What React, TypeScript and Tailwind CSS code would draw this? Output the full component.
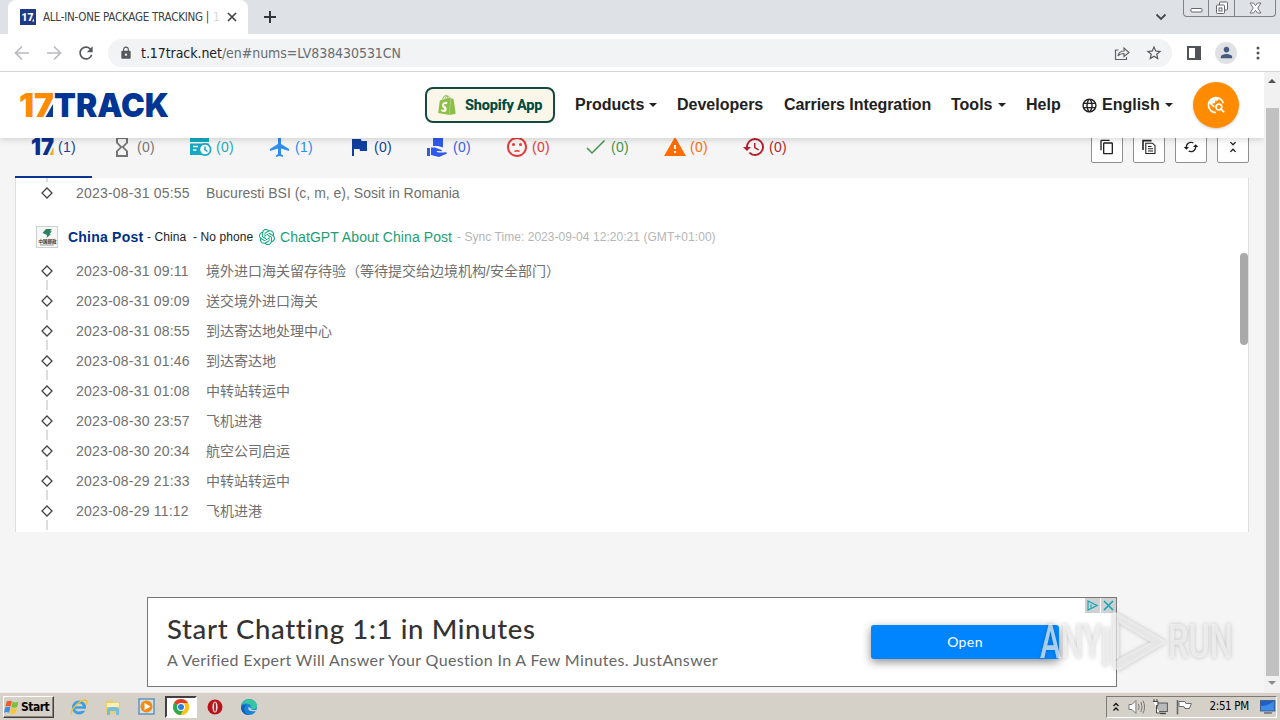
import React from "react";
import {
  MdContentCopy,
  MdFlag,
  MdFlight,
  MdHistory,
  MdHourglassEmpty,
  MdLanguage,
  MdLock,
  MdPerson,
  MdRefresh,
  MdStarBorder,
  MdTravelExplore,
  MdUnfoldLess,
  MdWarning,
  MdCached,
  MdSentimentDissatisfied,
} from "react-icons/md";
import { SiOpenai, SiShopify } from "react-icons/si";

const sans = "font-['Liberation_Sans','Noto_Sans_CJK_SC',sans-serif]";
const chrome = "font-['DejaVu_Sans_Condensed','DejaVu_Sans',sans-serif]";

function TabStrip() {
  return (
    <div className="flex h-[34px] shrink-0 items-end bg-[#dee1e6] pl-2">
      <div className="flex h-[34px] w-[240px] items-center rounded-t-lg bg-white pl-3">
        <svg width="16" height="16" viewBox="0 0 16 16" className="shrink-0">
          <rect width="16" height="16" fill="#1f3a85" />
          <text x="1.500" y="12" fontSize="11" fontWeight="900" fontFamily="Roboto" fill="#fff" textLength="12" lengthAdjust="spacingAndGlyphs">17</text>
          <path d="M12 12.500l2-3v3z" fill="#fff" />
        </svg>
        <div className="ml-[7px] flex w-[176px] overflow-hidden whitespace-nowrap text-[11.5px] leading-4 tracking-[-0.24px] text-[#3c4043]">
          ALL-IN-ONE PACKAGE TRACKING |<span className="ml-1 text-[#d5d7da]">1</span>
        </div>
        <svg width="12" height="12" viewBox="0 0 12 12" className="ml-[7px]" stroke="#3c4043" strokeWidth="1.600">
          <path d="M2 2l8 8M10 2l-8 8" />
        </svg>
      </div>
      <svg width="14" height="14" viewBox="0 0 14 14" className="mb-2.5 ml-[15px]" stroke="#33363a" strokeWidth="2">
        <path d="M7 1v12M1 7h12" />
      </svg>
      <div className="flex-1" />
      <svg width="12" height="8" viewBox="0 0 12 8" className="mr-4 mb-[13px]" fill="none" stroke="#44474b" strokeWidth="1.800">
        <path d="M1.500 1.500L6 6l4.500-4.500" />
      </svg>
      <div className="mr-1 flex h-[17px] w-[93px] self-start rounded-b-[4px] border border-t-0 border-[#7d828b]">
        <div className="flex w-[25px] items-center justify-center border-r border-[#7d828b]">
          <svg width="13" height="16" viewBox="0 0 13 16" fill="#fff" stroke="#62666e">
            <rect x="1" y="8.500" width="11" height="3.500" rx="1" />
          </svg>
        </div>
        <div className="flex w-[26px] items-center justify-center border-r border-[#7d828b]">
          <svg width="14" height="14" viewBox="0 0 14 14" fill="#fff" stroke="#62666e">
            <rect x="4.500" y="1" width="8" height="8" rx="1" />
            <rect x="1.500" y="4" width="8" height="8.500" rx="1" />
            <rect x="4" y="7" width="3" height="3" />
          </svg>
        </div>
        <div className="flex flex-1 items-center justify-center">
          <svg width="13" height="12" viewBox="0 0 13 12" fill="#fff" stroke="#62666e" strokeWidth="0.900">
            <path d="M1 1h3.500l2 2.700 2-2.700H12L8.700 6 12 11H8.500l-2-2.700-2 2.700H1l3.300-5z" />
          </svg>
        </div>
      </div>
    </div>
  );
}

function Toolbar() {
  return (
    <div className="flex h-[38px] shrink-0 items-center border-b border-[#d3d5d8] bg-white">
      <svg width="16" height="16" viewBox="0 0 16 16" className="ml-3.5" fill="none" stroke="#b9bbbe" strokeWidth="1.700">
        <path d="M15 8H2M8 1.500L1.500 8 8 14.500" />
      </svg>
      <svg width="16" height="16" viewBox="0 0 16 16" className="ml-4" fill="none" stroke="#b9bbbe" strokeWidth="1.700">
        <path d="M1 8h13M8 1.500L14.500 8 8 14.500" />
      </svg>
      <MdRefresh className="ml-[14px] size-5 text-[#54575b]" />
      <div className="ml-3 flex h-7 w-[1064px] items-center rounded-full bg-[#f1f3f4]">
        <MdLock className="ml-[11px] size-[14px] text-[#55585c]" />
        <div className="ml-2 whitespace-nowrap text-[14px] leading-5 tracking-[-0.06px] text-[#6a6d71]">
          <span className="text-[#202124]">t.17track.net</span>/en#nums=LV838430531CN
        </div>
        <div className="flex-1" />
        <svg width="16" height="16" viewBox="0 0 16 16" fill="none" stroke="#5f6368" strokeWidth="1.200">
          <path d="M4.500 5H1.500v9.500h11V12M4 11c.5-3.500 2.500-5 6-5V3l5 4.500-5 4V8.500C7.500 8.500 5.500 9 4 11z" />
        </svg>
        <MdStarBorder className="mr-[9px] ml-[15px] size-[18px] text-[#55585c]" />
      </div>
      <svg width="14" height="14" viewBox="0 0 14 14" className="ml-[15px]">
        <path d="M0 0h14v14H0zM2 2v10h6V2z" fill="#505357" fillRule="evenodd" />
      </svg>
      <div className="ml-3.5 flex size-[22px] items-center justify-center rounded-full bg-[#dfe1e5]">
        <MdPerson className="size-[17px] text-[#475a80]" />
      </div>
      <svg width="4" height="14" viewBox="0 0 4 14" className="ml-[19px]" fill="#505357">
        <circle cx="2" cy="2" r="1.500" />
        <circle cx="2" cy="7" r="1.500" />
        <circle cx="2" cy="12" r="1.500" />
      </svg>
    </div>
  );
}

function Caret() {
  return (
    <svg width="8" height="4" viewBox="0 0 8 4" className="shrink-0">
      <path d="M0 0h8L4 4z" fill="#222" />
    </svg>
  );
}

function SiteHeader() {
  return (
    <header className="relative z-10 flex h-[66px] shrink-0 items-center gap-5 bg-white pr-[25px] pl-5 text-[16px] font-bold whitespace-nowrap text-[#212121] shadow-[0_2px_6px_rgba(0,0,0,0.14)]">
      <svg width="150" height="26" viewBox="0 0 150 26" className="overflow-visible" fontFamily="Inter, Roboto, sans-serif" fontWeight="900" fontSize="33">
        <text x="-1" y="25" fill="#ff8c00" textLength="35" lengthAdjust="spacingAndGlyphs">17</text>
        <path d="M25.500 25l7.500-13v13z" fill="#0a3a8f" />
        <text x="34" y="25" fill="#003594" textLength="115" lengthAdjust="spacingAndGlyphs">TRACK</text>
      </svg>
      <div className="flex-1" />
      <div className="flex h-9 w-[130px] items-center rounded-lg border-2 border-[#154a40] bg-[#fbf6ea] pl-2.5">
        <SiShopify className="size-[20px] shrink-0 text-[#8bbf4a]" />
        <span className="mt-px ml-[8px] font-['Roboto',sans-serif] text-[14.5px] font-extrabold tracking-[-0.2px] text-[#004c3f]">Shopify App</span>
      </div>
      <div className="flex w-[82px] items-center justify-between">Products<Caret /></div>
      <div className="w-[87px]">Developers</div>
      <div className="w-[147px] tracking-[-0.06px]">Carriers Integration</div>
      <div className="flex w-[55px] items-center justify-between">Tools<Caret /></div>
      <div className="w-[35px]">Help</div>
      <div className="flex w-[92px] items-center">
        <MdLanguage className="mr-1 size-[17px]" />
        <span className="flex-1">English</span>
        <Caret />
      </div>
      <div className="flex size-[46px] items-center justify-center rounded-full bg-[#ff8c00] shadow-[0_1px_3px_rgba(0,0,0,0.2)]">
        <MdTravelExplore className="size-5 text-white" />
      </div>
    </header>
  );
}

function Logo17() {
  return (
    <svg width="24" height="24" viewBox="0 0 24 24" className="overflow-visible" fontFamily="Inter, Roboto, sans-serif">
      <text x="0" y="20" fontSize="23" fontWeight="900" fill="#0a318f" textLength="23" lengthAdjust="spacingAndGlyphs">17</text>
      <path d="M18.500 20l4-8v8z" fill="#f5a623" />
    </svg>
  );
}

function CardClock() {
  return (
    <svg width="24" height="24" viewBox="0 0 24 24">
      <path d="M1 3h19v4H1zM1 8.500h19V20H1z" fill="#17a9c0" />
      <path d="M4 11.500h5M4 15h3.500" stroke="#f5f5f5" strokeWidth="1.500" />
      <circle cx="16" cy="14.500" r="6.500" fill="#17a9c0" />
      <circle cx="16" cy="14.500" r="4.800" fill="#f5f5f5" />
      <path d="M16 11.500v3.200l2.500 1.800" fill="none" stroke="#17a9c0" strokeWidth="1.500" />
    </svg>
  );
}

function HandBox() {
  return (
    <svg width="24" height="24" viewBox="0 0 24 24" fill="#2f5bea">
      <path d="M7 2h10v10.500l-5-1.500H7z" />
      <path d="M1 13h3v8H1zM5 12.500h4l6 2.200c.8.300 1 .8 1 1.500l-5-.2-.2.900 2.200.6H18c1.500-.5 3 0 3 1L13 22l-8-2z" />
    </svg>
  );
}

function ThinCheck() {
  return (
    <svg width="24" height="24" viewBox="0 0 24 24" fill="none" stroke="currentColor" strokeWidth="1.500">
      <path d="M3 13l5 5L20.500 5.500" />
    </svg>
  );
}

const tabs = [
  { icon: <Logo17 />, n: 1, color: "text-[#1c3f94]" },
  { icon: <MdHourglassEmpty className="size-6" />, n: 0, color: "text-[#757575]" },
  { icon: <CardClock />, n: 0, color: "text-[#26a9be]" },
  { icon: <MdFlight className="size-6" />, n: 1, color: "text-[#2f8cf0]" },
  { icon: <MdFlag className="size-6" />, n: 0, color: "text-[#0f3f9e]" },
  { icon: <HandBox />, n: 0, color: "text-[#3a62e0]" },
  { icon: <MdSentimentDissatisfied className="size-6" />, n: 0, color: "text-[#e53935]" },
  { icon: <ThinCheck />, n: 0, color: "text-[#43934a]" },
  { icon: <MdWarning className="size-6" />, n: 0, color: "text-[#ff6d00]" },
  { icon: <MdHistory className="size-6" />, n: 0, color: "text-[#b31f2b]" },
];

function CopyDetails() {
  return (
    <svg width="16" height="16" viewBox="0 0 16 16" fill="none" stroke="#222" strokeWidth="1.300">
      <path d="M2 11V1.600H10.500" strokeWidth="1.600" />
      <path d="M4.800 4.200h6.700L14 6.700v7.800H4.800zM7 7.500h3.500M7 9.700h5M7 12h5" strokeWidth="1.100" />
    </svg>
  );
}

const actions = [
  <MdContentCopy className="size-4" />,
  <CopyDetails />,
  <MdCached className="size-4" />,
  <MdUnfoldLess className="size-4" />,
];

function StatusTabs() {
  return (
    <div className="flex h-10 shrink-0 overflow-hidden pr-[15px] pl-[15px]">
      {tabs.map((t, i) => (
        <div key={i} className={`flex w-[79px] shrink-0 flex-col justify-between ${t.color}`}>
          <div className="-mt-[3px] flex h-6 items-center gap-[3px] pl-4">
            <span className="flex size-6 shrink-0">{t.icon}</span>
            <span className="text-[14px] leading-5 tracking-[0.3px]">({t.n})</span>
          </div>
          {i === 0 && <div className="h-[2px] w-[77px] bg-[#0a3590]" />}
        </div>
      ))}
      <div className="flex-1" />
      <div className="-mt-[7px] flex gap-2.5">
        {actions.map((a, i) => (
          <div key={i} className="flex h-8 w-8 items-center justify-center rounded-[2px] border border-[#8f8f8f] bg-white text-[#222]">
            {a}
          </div>
        ))}
      </div>
    </div>
  );
}

function Event({ time, text, first, last }: { time: string; text: string; first?: boolean; last?: boolean }) {
  return (
    <div className="flex h-[30px] items-center text-[14px] text-[#707070]">
      <div className="flex h-[30px] w-[62px] flex-col items-center justify-between">
        <div className={first ? "h-1 w-[2px]" : "h-1 w-[2px] bg-[#dcdcdc]"} />
        <svg width="12" height="12" viewBox="0 0 12 12" className="mt-[2px]">
          <path d="M6 1l5 5-5 5-5-5z" fill="#fff" stroke="#444" strokeWidth="1.300" />
        </svg>
        <div className={last ? "h-1.5 w-[2px]" : "h-1.5 w-[2px] bg-[#dcdcdc]"} />
      </div>
      <div className="-ml-[2px] w-[130px] tracking-[0.2px] whitespace-nowrap">{time}</div>
      <div className="whitespace-nowrap">{text}</div>
    </div>
  );
}

const events = [
  ["2023-08-31 09:11", "境外进口海关留存待验（等待提交给边境机构/安全部门）"],
  ["2023-08-31 09:09", "送交境外进口海关"],
  ["2023-08-31 08:55", "到达寄达地处理中心"],
  ["2023-08-31 01:46", "到达寄达地"],
  ["2023-08-31 01:08", "中转站转运中"],
  ["2023-08-30 23:57", "飞机进港"],
  ["2023-08-30 20:34", "航空公司启运"],
  ["2023-08-29 21:33", "中转站转运中"],
  ["2023-08-29 11:12", "飞机进港"],
];

function Timeline() {
  return (
    <section className="relative mx-[15px] h-[354px] w-[1234px] shrink-0 overflow-hidden border-x border-[#dfdfdf] bg-white">
      <Event time="2023-08-31 05:55" text="Bucuresti BSI (c, m, e), Sosit in Romania" last />
      <div className="flex h-12 items-center pt-2.5 pl-5 text-[12px] whitespace-nowrap">
        <svg width="22" height="22" viewBox="0 0 22 22" className="shrink-0">
          <rect x="0.500" y="0.500" width="21" height="21" fill="#f6f8f7" stroke="#d0d0d0" />
          <path d="M6.500 7l3.500-4h6l-2 2.300h2L13.500 8h1.500l-4.500 4 .5-3z" fill="#2d8062" />
          <text x="2.500" y="17.300" fontSize="4.500" fontWeight="700" fontFamily="Noto Sans CJK SC" fill="#333">中国邮政</text>
          <path d="M4 19h14" stroke="#888" strokeWidth="0.800" />
        </svg>
        <span className="ml-2.5 w-[76px] text-[14px] font-bold tracking-[0.22px] text-[#002f87]">China Post</span>
        <span className="ml-[3px] w-[108px] tracking-[0.08px] text-[#222]">- China &nbsp;- No phone</span>
        <SiOpenai className="ml-1 size-4 text-[#10a37f]" />
        <span className="ml-[5px] w-[174px] text-[14px] tracking-[0.08px] text-[#1c9d74]">ChatGPT About China Post</span>
        <span className="ml-[3px] tracking-[0.05px] text-[#b5b5b5]">- Sync Time: 2023-09-04 12:20:21 (GMT+01:00)</span>
      </div>
      {events.map(([time, text], i) => (
        <Event key={time} time={time} text={text} first={i === 0} />
      ))}
      <div className="ml-[30px] h-1 w-[2px] bg-[#dcdcdc]" />
      <div className="absolute top-[75px] right-0 h-[92px] w-2 rounded-[4px] bg-[#a9a9a9]" />
    </section>
  );
}

function Ad() {
  return (
    <div className="mt-[65px] ml-[147px] flex h-[90px] w-[970px] shrink-0 border border-[#777] bg-white pl-[19px] font-['Lato',sans-serif] whitespace-nowrap">
      <div className="w-[704px] pt-[13px]">
        <div className="text-[27.5px] leading-9 font-medium tracking-[0.65px] text-[#333]">Start Chatting 1:1 in Minutes</div>
        <div className="mt-px text-[16px] leading-6 tracking-[0.35px] text-[#666]">A Verified Expert Will Answer Your Question In A Few Minutes. JustAnswer</div>
      </div>
      <div className="mt-[27px] flex h-[34px] w-[188px] items-center justify-center rounded-[3px] bg-[#0085ff] pb-[2px] text-[14px] tracking-[0.4px] text-white shadow-[0_3px_10px_rgba(0,0,0,0.45)]">
        Open
      </div>
      <div className="ml-[26px] flex h-[15px] gap-px">
        <div className="flex w-[15px] items-center justify-center bg-[#cfd0d1]">
          <svg width="11" height="11" viewBox="0 0 11 11" fill="none" stroke="#14a5b4" strokeWidth="1.200">
            <path d="M1 1l9 4.500L1 10zM4 4.500v3" />
          </svg>
        </div>
        <div className="flex w-[15px] items-center justify-center bg-[#cfd0d1]">
          <svg width="11" height="11" viewBox="0 0 11 11" stroke="#14a5b4" strokeWidth="1.600">
            <path d="M1 1l9 9M10 1l-9 9" />
          </svg>
        </div>
      </div>
    </div>
  );
}

function Scrollbar() {
  return (
    <div className="flex w-4 shrink-0 flex-col items-center bg-[#f1f1f1]">
      <svg width="16" height="36" viewBox="0 0 16 36">
        <path d="M4 11l4-4 4 4z" fill="#505050" />
      </svg>
      <div className="h-[568px] w-[13px] bg-[#c1c1c1]" />
      <svg width="16" height="16" viewBox="0 0 16 16">
        <path d="M4 5h8l-4 4z" fill="#8a8a8a" />
      </svg>
    </div>
  );
}

function Watermark() {
  return (
    <svg
      width="200"
      height="68"
      viewBox="0 0 200 68"
      className="absolute top-[608px] left-[1036px] z-20 overflow-visible drop-shadow-[0_0_2px_rgba(0,0,0,0.3)]"
      fontFamily="Roboto, sans-serif"
      fontSize="49"
    >
      <g fill="#f4f4f4" fillOpacity="0.7">
        <text x="4" y="50" fontWeight="500" textLength="62" lengthAdjust="spacingAndGlyphs">ANY</text>
        <text x="132" y="50" fontWeight="500" textLength="65" lengthAdjust="spacingAndGlyphs">RUN</text>
        <path d="M78 3l50 29c2 1 2 3 0 4L82 63l-5-4V54l38-20-32-19v35l-6 4V5zM73 18v38l-6 3V22z" fillRule="evenodd" />
      </g>
    </svg>
  );
}

function Taskbar() {
  return (
    <footer className="flex h-[28px] shrink-0 items-center border-t border-[#efece6] bg-[#d5d0c8] pt-px pl-[3px]">
      <div className="flex h-[22px] w-[51px] items-center border border-t-white border-r-[#404040] border-b-[#404040] border-l-white text-[12px] font-bold text-black shadow-[inset_-1px_-1px_0_#8a867f]">
        <svg width="16" height="16" viewBox="0 0 17 16" className="shrink-0">
          <path d="M3 2c2-1 4-1 5.500 0L7 7.500C5.500 6.600 3.500 6.600 1.500 7.500z" fill="#ee5a2b" />
          <path d="M9.300 2.500c2 1 4 1 6 0L14 8c-2 1-4 1-6.200 0z" fill="#7bbf3a" />
          <path d="M1.300 8.500c2-1 4-1 5.500 0L5.300 14c-1.500-1-3.500-1-5.300 0z" fill="#3d8ee0" />
          <path d="M7.600 9c2 1 4 1 6.200 0l-1.500 5.500c-2 1-4 1-6.200 0z" fill="#fbc52e" />
        </svg>
        <span className="ml-px tracking-[-0.5px]">Start</span>
      </div>
      <svg width="18" height="18" viewBox="0 0 18 18" className="ml-4">
        <circle cx="9" cy="9.500" r="5.500" fill="none" stroke="#3a9ee6" strokeWidth="3" />
        <path d="M5 9.500h9" stroke="#3a9ee6" strokeWidth="2.400" />
        <path d="M10.500 11.800h6" stroke="#d5d0c8" strokeWidth="2" />
        <path d="M1.500 16C0 11 12 0 16.500 2.500c1 .7.500 2.500-.5 4" fill="none" stroke="#f3c032" strokeWidth="1.400" />
      </svg>
      <svg width="18" height="18" viewBox="0 0 18 18" className="ml-[16px]">
        <path d="M2 3l6-1 1 2h7v12H2z" fill="#e9cf74" />
        <path d="M3 5h12v4H3z" fill="#fbf0b5" />
        <path d="M3 17v-5c0-2 2-3 4-3h4c2 0 4 1 4 3v5h-3v-4H6v4z" fill="#72bde0" />
      </svg>
      <svg width="18" height="18" viewBox="0 0 18 18" className="ml-[16px]">
        <rect x="1" y="1" width="15" height="15" fill="#cfe3f2" stroke="#5b8fb9" strokeWidth="1.400" />
        <circle cx="8.500" cy="8.500" r="6" fill="#f28a14" />
        <path d="M6.500 5l6 3.500-6 3.500z" fill="#fff" />
      </svg>
      <div className="ml-[9px] flex h-[22px] w-[32px] items-center justify-center border-2 border-t-[#404040] border-r-white border-b-white border-l-[#404040] bg-white">
        <svg width="16" height="16" viewBox="0 0 16 16">
          <circle cx="8" cy="8" r="8" fill="#fbc116" />
          <path d="M8 8L1.100 4A8 8 0 0 1 14.900 4z" fill="#e33b2e" />
          <path d="M8 8L1.100 4A8 8 0 0 0 7.500 16L11 9.500z" fill="#2da94f" />
          <path d="M8 4h6.900A8 8 0 0 1 7.500 16L11.400 10z" fill="#fbc116" />
          <circle cx="8" cy="8" r="4" fill="#fff" />
          <circle cx="8" cy="8" r="3" fill="#2f7de1" />
        </svg>
      </div>
      <svg width="16" height="16" viewBox="0 0 16 16" className="ml-[10px]">
        <circle cx="8" cy="8" r="7.500" fill="#b9121b" />
        <ellipse cx="8" cy="8" rx="2.600" ry="5.500" fill="#f0e0e0" />
        <ellipse cx="8" cy="8" rx="0.900" ry="4.800" fill="#9b1018" />
      </svg>
      <svg width="18" height="18" viewBox="0 0 18 18" className="ml-[17px]">
        <circle cx="9" cy="9" r="8" fill="#1684d8" />
        <path d="M1.500 7C3 2 8 .5 12 1.800c4 1.300 5.500 5 4.800 7.200-.8 2.500-4 3-6 2 .8-1 .7-4-2-5S3 5.500 1.500 7z" fill="#37c6a0" />
        <path d="M8.500 9c-1 3 1.500 5 7.500 4l.8-1.500c-4 1.500-6.300 0-6-1.500z" fill="#d5d0c8" />
        <path d="M6 7c-3 3-2 8 3 10-5 0-8-3.500-8-8 1-2 3-2.500 5-2z" fill="#1261b5" />
      </svg>
      <div className="flex-1" />
      <div className="mr-[3px] flex h-[22px] w-[171px] items-center border border-t-[#7d7a74] border-r-white border-b-white border-l-[#7d7a74]">
        <svg width="6" height="10" viewBox="0 0 6 10" className="ml-[6px]" fill="none" stroke="#111" strokeWidth="1.300">
          <path d="M.5 4L3 1.500 5.500 4M.5 8.500L3 6l2.500 2.500" />
        </svg>
        <svg width="18" height="16" viewBox="0 0 18 16" className="ml-[9px]" fill="#fff" stroke="#77787a">
          <path d="M1 5.500h3l4-4v13l-4-4H1z" />
          <path d="M10.500 5q1.500 3 0 6M13 3q2.500 5 0 10M15 1.500q3.500 6.500 0 13" fill="none" />
        </svg>
        <svg width="17" height="16" viewBox="0 0 17 16" className="ml-[6px]">
          <rect x="5" y="4" width="10.500" height="8.500" fill="#b9babb" stroke="#55575a" />
          <path d="M8 14.500h6" stroke="#444" strokeWidth="1.500" />
          <path d="M1 2.500h5v4H4.500V14H8" fill="#fff" stroke="#444" />
          <path d="M2 0v3M5 0v3" stroke="#444" />
        </svg>
        <svg width="17" height="16" viewBox="0 0 17 16" className="ml-[7px]" fill="#fff" stroke="#66686a">
          <path d="M3 2.500h6l1 2h5.500l-2 5H9l-1-2H3z" />
          <path d="M1.500 1v14.500" strokeWidth="1.600" />
        </svg>
        <span className="ml-[17px] w-[45px] text-[11.5px] tracking-[-0.35px] whitespace-nowrap text-black">2:51 PM</span>
        <svg width="16" height="14" viewBox="0 0 16 14" className="ml-[6px]">
          <rect x="0.500" y="0.500" width="14.500" height="10.500" fill="#1f5fc4" stroke="#3f5f92" />
          <path d="M1 6q7 0 13-5v9.500H1z" fill="#3f8be8" />
          <path d="M4 13h8" stroke="#5f6a78" strokeWidth="1.500" />
        </svg>
      </div>
    </footer>
  );
}

export default function App() {
  return (
    <div className={`relative flex h-[720px] w-[1280px] flex-col overflow-hidden bg-[#f5f5f5] ${sans}`}>
      <div className={chrome}>
        <TabStrip />
        <Toolbar />
      </div>
      <div className="flex h-[620px] shrink-0">
        <main className="flex w-[1264px] flex-col overflow-hidden bg-[#f5f5f5]">
          <SiteHeader />
          <StatusTabs />
          <Timeline />
          <Ad />
        </main>
        <Scrollbar />
      </div>
      <div className={chrome}>
        <Taskbar />
      </div>
      <Watermark />
    </div>
  );
}
